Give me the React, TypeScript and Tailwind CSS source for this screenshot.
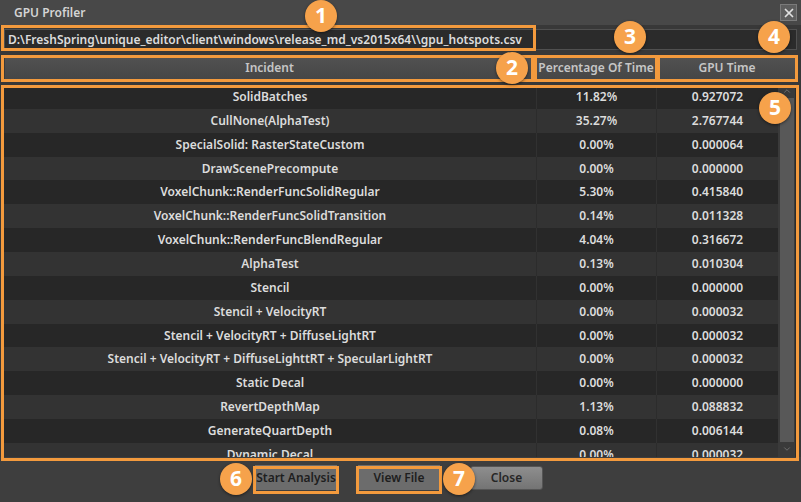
import { X, ChevronUp, ChevronDown } from "lucide-react";

const rows: [string, string, string][] = [
  ["SolidBatches", "11.82%", "0.927072"],
  ["CullNone(AlphaTest)", "35.27%", "2.767744"],
  ["SpecialSolid: RasterStateCustom", "0.00%", "0.000064"],
  ["DrawScenePrecompute", "0.00%", "0.000000"],
  ["VoxelChunk::RenderFuncSolidRegular", "5.30%", "0.415840"],
  ["VoxelChunk::RenderFuncSolidTransition", "0.14%", "0.011328"],
  ["VoxelChunk::RenderFuncBlendRegular", "4.04%", "0.316672"],
  ["AlphaTest", "0.13%", "0.010304"],
  ["Stencil", "0.00%", "0.000000"],
  ["Stencil + VelocityRT", "0.00%", "0.000032"],
  ["Stencil + VelocityRT + DiffuseLightRT", "0.00%", "0.000032"],
  ["Stencil + VelocityRT + DiffuseLighttRT + SpecularLightRT", "0.00%", "0.000032"],
  ["Static Decal", "0.00%", "0.000000"],
  ["RevertDepthMap", "1.13%", "0.088832"],
  ["GenerateQuartDepth", "0.08%", "0.006144"],
  ["Dynamic Decal", "0.00%", "0.000032"],
];

// numbered callouts over the screenshot
const marks = [
  { n: 1, cls: "left-[305px] top-0" },
  { n: 2, cls: "left-[496px] top-[52px]" },
  { n: 3, cls: "left-[614px] top-[21px]" },
  { n: 4, cls: "left-[758px] top-[21px]" },
  { n: 5, cls: "left-[759px] top-[92px]" },
  { n: 6, cls: "left-[220px] top-[463px]" },
  { n: 7, cls: "left-[443px] top-[463px]" },
];

const boxes = [
  "left-[1px] top-[25px] w-[535px] h-[26px]",
  "left-[1px] top-[55px] w-[533px] h-[27px]",
  "left-[534px] top-[55px] w-[124px] h-[27px]",
  "left-[657px] top-[55px] w-[141px] h-[27px]",
  "left-[1px] top-[85px] w-[798px] h-[376px]",
  "left-[253px] top-[466px] w-[86px] h-[28px]",
  "left-[356px] top-[466px] w-[86px] h-[28px]",
];

export default function App() {
  return (
    <div className="relative w-[801px] h-[502px] overflow-hidden bg-[#3e3e3e] font-['Noto_Sans',sans-serif] text-[12px] font-semibold text-[#dcdcdc]">
      {/* title bar */}
      <div className="h-[25px] bg-[#484848] flex items-center justify-between pl-[14px] pr-[4px]">
        <span className="text-[#d4d4d4]">GPU Profiler</span>
        <div className="w-[17px] h-[17px] bg-[#5e5e5e] border border-[#7a7a7a] flex items-center justify-center">
          <X className="w-[14px] h-[14px] text-[#e0e0e0]" strokeWidth={3} />
        </div>
      </div>

      <div className="bg-[#383838] px-[4px] pt-[4px]">
        {/* path field */}
        <div className="h-[21px] bg-[#2b2b2b] border border-[#505050] flex items-center pl-[3px] whitespace-nowrap">
          D:\FreshSpring\unique_editor\client\windows\release_md_vs2015x64\\gpu_hotspots.csv
        </div>

        {/* header */}
        <div className="mt-[6px] h-[24px] flex text-[#c6c6c6]">
          <div className="w-[531px] bg-gradient-to-b from-[#515151] to-[#464646] border border-[#3a3a3a] flex items-center justify-center">Incident</div>
          <div className="w-[122px] bg-gradient-to-b from-[#515151] to-[#464646] border border-[#3a3a3a] flex items-center justify-center whitespace-nowrap">Percentage Of Time</div>
          <div className="flex-1 bg-gradient-to-b from-[#515151] to-[#464646] border border-[#3a3a3a] flex items-center justify-center">GPU Time</div>
        </div>

        {/* table */}
        <div className="mt-[5px] h-[372px] flex overflow-hidden bg-[#2a2a2a]">
          <div className="w-[774px] overflow-hidden">
            {rows.map((r, i) => (
              <div key={i} className={`h-[23.86px] flex items-center ${i % 2 === 0 ? "bg-[#272727]" : "bg-[#333333]"}`}>
                <div className="w-[532px] text-center whitespace-nowrap">{r[0]}</div>
                <div className={`w-[120px] h-full flex items-center justify-center border-l ${i % 2 === 0 ? "border-[#313131]" : "border-[#2c2c2c]"}`}>{r[1]}</div>
                <div className={`flex-1 h-full flex items-center justify-center border-l ${i % 2 === 0 ? "border-[#313131]" : "border-[#2c2c2c]"}`}>{r[2]}</div>
              </div>
            ))}
          </div>
          <div className="w-[17px] bg-[#3a3a3a] flex flex-col items-center">
            <ChevronUp className="w-[12px] h-[10px] text-[#777] mt-[1px]" />
            <div className="w-[14px] flex-1 bg-[#585858] mt-[2px] mb-[2px]" />
            <ChevronDown className="w-[12px] h-[10px] text-[#777] mb-[3px]" />
          </div>
        </div>
      </div>

      {/* footer */}
      <div className="flex items-center pt-[8px] text-[#1e1e1e] font-semibold">
        <div className="ml-[255px] w-[82px] h-[25px] bg-[#6c6c6c] flex items-center justify-center whitespace-nowrap">Start Analysis</div>
        <div className="ml-[21px] w-[82px] h-[25px] bg-[#6c6c6c] flex items-center justify-center">View File</div>
        <div className="ml-[30px] w-[73px] h-[24px] rounded-[3px] bg-gradient-to-b from-[#8e8e8e] to-[#747474] border border-[#555] flex items-center justify-center text-[#262626]">Close</div>
      </div>

      {boxes.map((b, i) => (
        <div key={i} className={`absolute ${b} border-[3px] border-[#f39a3d] pointer-events-none`} />
      ))}
      {marks.map((m) => (
        <div key={m.n} className={`absolute ${m.cls} w-[32px] h-[32px] rounded-full bg-[#f6a24b] shadow-[0_1px_3px_rgba(0,0,0,0.5)] flex items-center justify-center text-white text-[21px] font-bold font-['Open_Sans',sans-serif]`}>
          {m.n}
        </div>
      ))}
    </div>
  );
}
